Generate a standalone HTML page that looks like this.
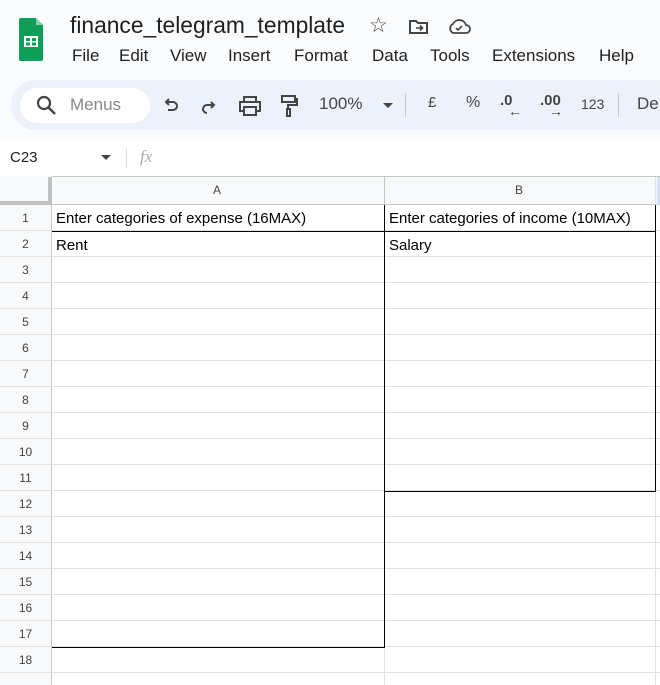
<!DOCTYPE html>
<html style="height:685px;overflow:hidden"><head><style>
*{margin:0;padding:0;box-sizing:border-box}
body{width:660px;height:685px;overflow:hidden;background:#f9fbfd;font-family:"Liberation Sans",Arial,sans-serif;position:relative}
.a{position:absolute}
.rn{position:absolute;left:0;width:51px;text-align:center;font-size:12px;color:#444}
.hl{position:absolute;height:1px;background:#e1e1e1}
.vl{position:absolute;width:1px;background:#e1e1e1}
.cell{position:absolute;font-size:15px;color:#000}
.tb{position:absolute;top:94px;font-size:17px;color:#444}
</style></head><body>
<svg class="a" style="left:19px;top:18px" width="24" height="44" viewBox="0 0 24 44">
<path d="M2 0H17L24 7V41a2 2 0 0 1-2 2H2a2 2 0 0 1-2-2V2a2 2 0 0 1 2-2z" fill="#0f9d58"/>
<path d="M17 0L24 7H17z" fill="#87ceac"/>
<rect x="5" y="18" width="14" height="11" fill="#fff"/>
<rect x="7" y="20" width="4" height="3" fill="#0f9d58"/><rect x="13" y="20" width="4" height="3" fill="#0f9d58"/>
<rect x="7" y="24.5" width="4" height="3" fill="#0f9d58"/><rect x="13" y="24.5" width="4" height="3" fill="#0f9d58"/>
</svg>
<div class="a" style="left:70px;top:12px;font-size:22.8px;color:#1f1f1f">finance_telegram_template</div>
<div class="a" style="left:369px;top:13px;font-size:21px;color:#444">☆</div>
<svg class="a" style="left:409px;top:19px" width="20" height="16" viewBox="0 0 20 16"><path d="M1 2h6l2 2h9v10H1z" fill="none" stroke="#444" stroke-width="2"/><path d="M7 9h6M11 6.5l2.5 2.5-2.5 2.5" fill="none" stroke="#444" stroke-width="1.6"/></svg>
<svg class="a" style="left:447px;top:18px" width="24" height="17" viewBox="0 0 24 17"><path d="M6 15a5 5 0 0 1 0-9 7 7 0 0 1 13 1 4 4 0 0 1 0 8z" fill="none" stroke="#444" stroke-width="1.8"/><path d="M9 10l2 2 4-4" fill="none" stroke="#444" stroke-width="1.6"/></svg>
<div class="a" style="top:46px;font-size:17px;color:#1f1f1f">
<span class="a" style="left:72px">File</span><span class="a" style="left:119px">Edit</span><span class="a" style="left:170px">View</span><span class="a" style="left:228px">Insert</span><span class="a" style="left:294px">Format</span><span class="a" style="left:372px">Data</span><span class="a" style="left:430px">Tools</span><span class="a" style="left:492px">Extensions</span><span class="a" style="left:599px">Help</span></div>
<div class="a" style="left:11px;top:80px;width:670px;height:50px;border-radius:25px;background:#edf2fa"></div>
<div class="a" style="left:20px;top:88px;width:130px;height:35px;border-radius:18px;background:#fff"></div>
<svg class="a" style="left:36px;top:95px" width="22" height="22" viewBox="0 0 22 22"><circle cx="8" cy="8" r="6" fill="none" stroke="#444" stroke-width="2.2"/><path d="M12.5 12.5L19 19" stroke="#444" stroke-width="2.5"/></svg>
<div class="a" style="left:70px;top:95px;font-size:17px;color:#888">Menus</div>
<svg class="a" style="left:162px;top:97px" width="18" height="18" viewBox="0 0 18 18"><path d="M4 5h7a4 4 0 0 1 0 8H6M7 2L4 5l3 3" fill="none" stroke="#444" stroke-width="2"/></svg>
<svg class="a" style="left:200px;top:97px" width="18" height="18" viewBox="0 0 18 18"><path d="M14 8H7a4 4 0 0 0 0 8M11 5l3 3-3 3" fill="none" stroke="#444" stroke-width="2"/></svg>
<svg class="a" style="left:239px;top:96px" width="22" height="20" viewBox="0 0 22 20"><path d="M5 6V1h12v5M5 15H1V6h20v9h-4M5 11h12v8H5z" fill="none" stroke="#444" stroke-width="2"/></svg>
<svg class="a" style="left:280px;top:95px" width="18" height="22" viewBox="0 0 18 22"><path d="M2 1h13v6H2zM15 4h2v6H8v4M7 14h3v7H7z" fill="none" stroke="#444" stroke-width="2"/></svg>
<div class="tb" style="left:319px">100%</div>
<div class="a" style="left:383px;top:103px;border:5px solid transparent;border-top:5px solid #444"></div>
<div class="a" style="left:405px;top:93px;width:1px;height:24px;background:#c7c7c7"></div>
<div class="tb" style="left:428px;font-size:15px">£</div>
<div class="tb" style="left:466px;font-size:16px">%</div>
<div class="tb" style="left:500px;font-size:15px;font-weight:bold;top:92px">.0</div>
<div class="a" style="left:508px;top:103px;font-size:14px;font-weight:bold;color:#444">←</div>
<div class="tb" style="left:540px;font-size:15px;font-weight:bold;top:92px">.00</div>
<div class="a" style="left:549px;top:103px;font-size:14px;font-weight:bold;color:#444">→</div>
<div class="tb" style="left:581px;font-size:14px;top:96px">123</div>
<div class="a" style="left:618px;top:93px;width:1px;height:24px;background:#c7c7c7"></div>
<div class="tb" style="left:637px;font-size:17px">De</div>
<div class="a" style="left:0;top:140px;width:660px;height:36px;background:#fff"></div>
<div class="a" style="left:10px;top:149px;font-size:15px;color:#1f1f1f">C23</div>
<div class="a" style="left:101px;top:155px;border:5px solid transparent;border-top:5px solid #444"></div>
<div class="a" style="left:126px;top:148px;width:1px;height:20px;background:#dadce0"></div>
<div class="a" style="left:140px;top:147px;font-size:17px;font-style:italic;color:#aaa;font-family:'Liberation Serif',serif">fx</div>
<div class="a" style="left:0;top:176px;width:660px;height:509px;background:#fff"></div>
<div class="a" style="left:0;top:176px;width:660px;height:29px;background:#f8f9fa;border-top:1px solid #c4c7c5"></div>
<div class="a" style="left:0;top:176px;width:52px;height:509px;background:#f8f9fa"></div>
<div class="a" style="left:48px;top:177px;width:4px;height:28px;background:#c0c0c0"></div>
<div class="a" style="left:0;top:201px;width:52px;height:4px;background:#c0c0c0"></div>
<div class="a" style="left:52px;top:204px;width:608px;height:1px;background:#c4c7c5"></div>
<div class="a" style="left:51px;top:205px;width:1px;height:480px;background:#c4c7c5"></div>
<div class="vl" style="left:384px;top:177px;height:28px;background:#c4c7c5"></div>
<div class="vl" style="left:384px;top:205px;height:480px"></div>
<div class="vl" style="left:655px;top:177px;height:508px"></div>
<div class="a" style="left:657px;top:177px;width:3px;height:28px;background:#d3e3fd"></div>
<div class="a" style="left:213px;top:183px;font-size:12px;color:#444">A</div>
<div class="a" style="left:515px;top:183px;font-size:12px;color:#444">B</div>
<div id="rows"></div>
<script>
var h='';for(var i=1;i<=18;i++){var y=205+26*(i-1);h+='<div class="hl" style="left:0;top:'+(y+25)+'px;width:660px"></div><div class="rn" style="top:'+(y+6)+'px">'+i+'</div>';}
document.getElementById('rows').innerHTML=h;
</script>
<div class="a" style="left:52px;top:231px;width:604px;height:1px;background:#000"></div>
<div class="a" style="left:384px;top:205px;width:1px;height:443px;background:#000"></div>
<div class="a" style="left:52px;top:647px;width:333px;height:1px;background:#000"></div>
<div class="a" style="left:655px;top:205px;width:1px;height:287px;background:#000"></div>
<div class="a" style="left:384px;top:491px;width:272px;height:1px;background:#000"></div>
<div class="cell" style="left:56px;top:210px">Enter categories of expense (16MAX)</div>
<div class="cell" style="left:389px;top:210px">Enter categories of income (10MAX)</div>
<div class="cell" style="left:56px;top:237px">Rent</div>
<div class="cell" style="left:389px;top:237px">Salary</div>
</body></html>
